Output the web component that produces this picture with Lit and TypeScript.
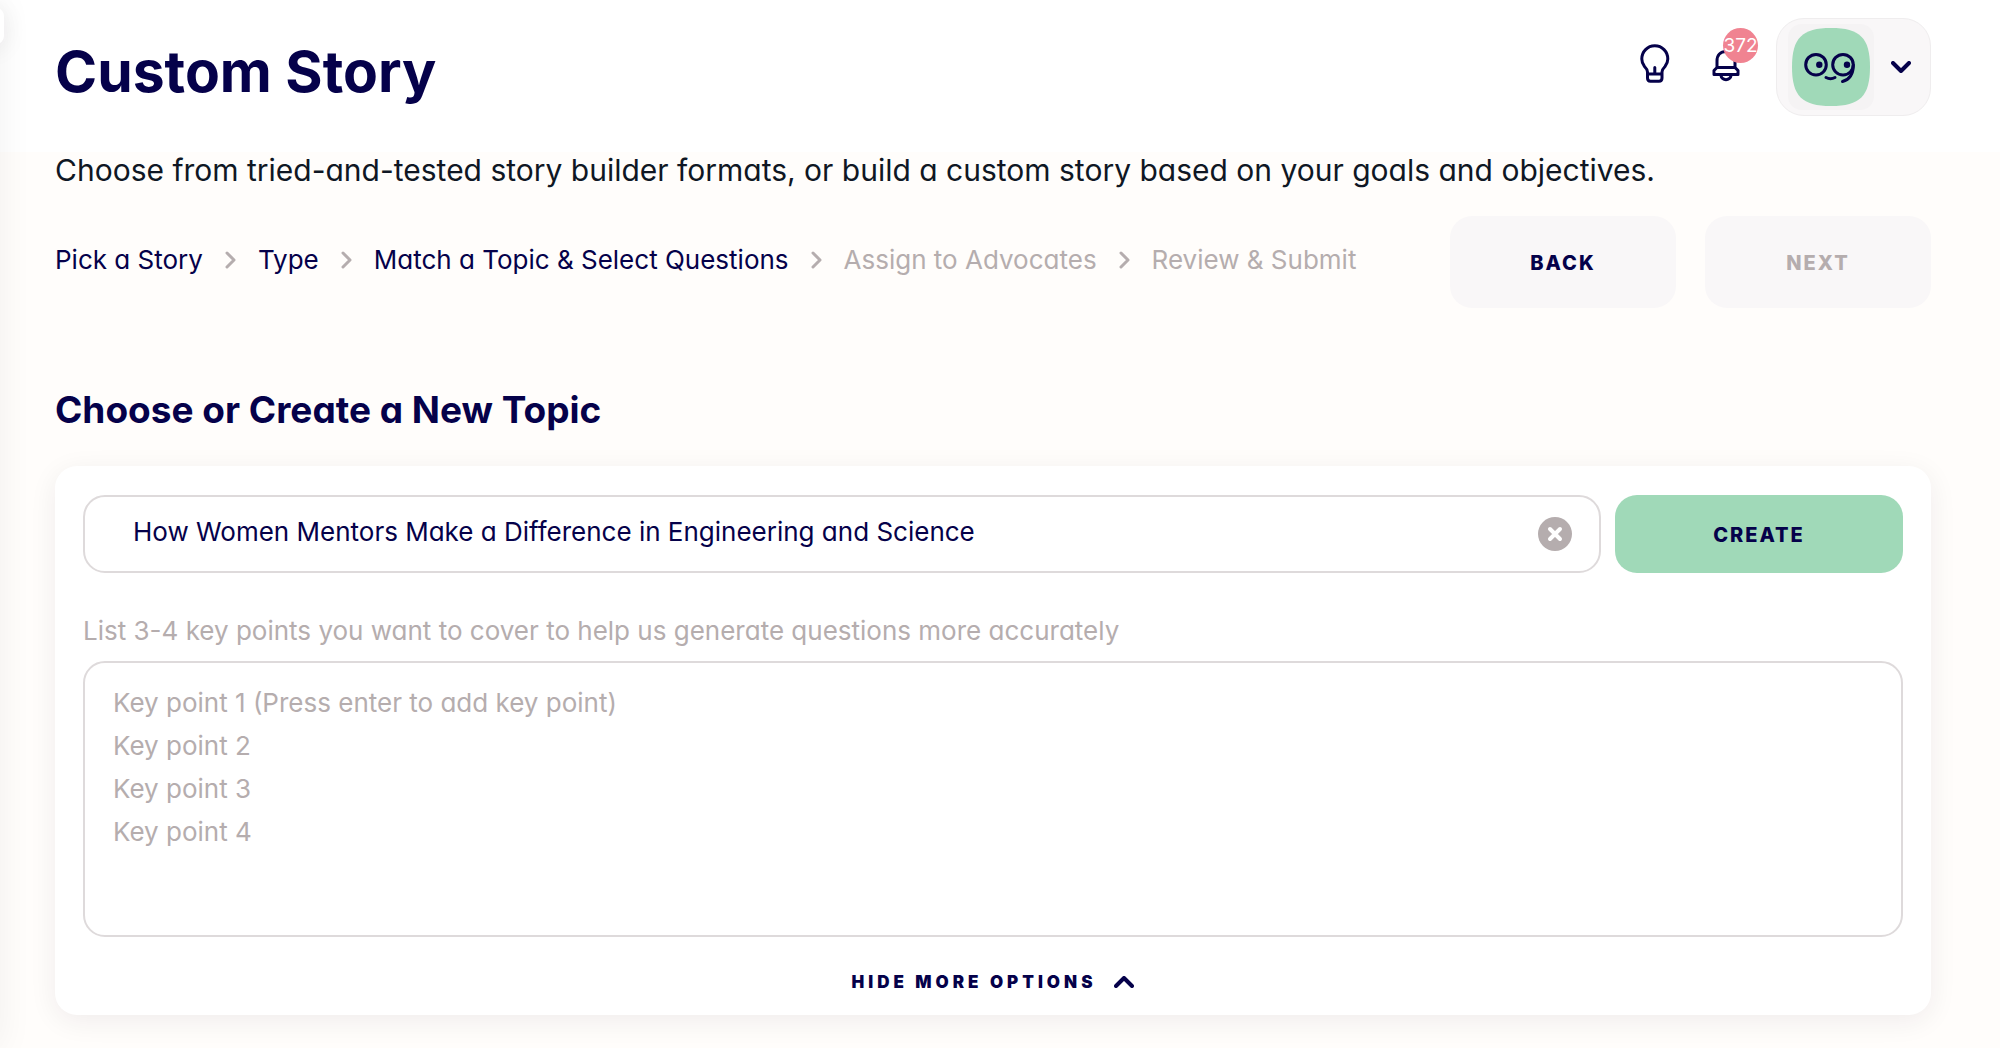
import { LitElement, html, css, svg } from "lit";
import { customElement, state } from "lit/decorators.js";

interface Step {
  label: string;
  reached: boolean;
}

const STEPS: Step[] = [
  { label: "Pick a Story", reached: true },
  { label: "Type", reached: true },
  { label: "Match a Topic & Select Questions", reached: true },
  { label: "Assign to Advocates", reached: false },
  { label: "Review & Submit", reached: false },
];

const KEY_POINTS = [
  "Key point 1 (Press enter to add key point)",
  "Key point 2",
  "Key point 3",
  "Key point 4",
].join("\n");

const bulbIcon = html`<svg class="icon" width="30" height="40" viewBox="0 0 30 40" aria-hidden="true">
  ${svg`<path d="M7.5 30V28C7.5 25.5 6.5 24.5 4.5 22.5C2.5 20 1.8 18 1.8 15C1.8 7.5 7.5 1.8 14.8 1.8S27.800 7.5 27.8 15C27.8 18 27 20 25 22.5C23 24.5 22 25.5 22 28V30M14.8 23.5V30M7.5 30H22M7.5 30V34Q7.5 37.2 10.5 37.2H19Q22 37.2 22 34V30" />`}
</svg>`;

const bellIcon = html`<svg class="icon" width="30" height="40" viewBox="0 0 30 40" aria-hidden="true">
  ${svg`<path d="M6 23V17C6 11 9.5 7.5 15 7.5S24 11 24 17V23M6 23.5H24L27 26.5V30.5H3V26.5ZM10 31.5C10.5 37 19.5 37 20 31.5" />`}
</svg>`;

const chevron = (cls: string, d: string, w: number, h: number) =>
  html`<svg class=${cls} width=${w} height=${h} viewBox="0 0 ${w} ${h}" aria-hidden="true"><path d=${d} /></svg>`;

@customElement("app-root")
export class AppRoot extends LitElement {
  @state() private topic = "How Women Mentors Make a Difference in Engineering and Science";
  @state() private expanded = true;

  static styles = css`
    :host {
      --navy: #05014a;
      --grey: #b5adae;
      --line: #dedadb;
      --soft: #f9f7f8;
      --green: #a0d9b8;
      display: block;
      position: relative;
      min-height: 100vh;
      overflow: hidden;
      background: #fffdfb;
      color: var(--navy);
      font-family: Inter, "Liberation Sans", sans-serif;
      font-feature-settings: "cv11";
      font-size: 26px;
      line-height: 32px;
    }
    * {
      box-sizing: border-box;
    }
    button,
    input,
    textarea {
      font: inherit;
      font-feature-settings: inherit;
      color: inherit;
      margin: 0;
    }
    button {
      border: 0;
      padding: 0;
      background: none;
      cursor: pointer;
    }
    h1,
    h2,
    p,
    ol {
      margin: 0;
      padding: 0;
    }
    svg {
      display: block;
      flex: none;
      fill: none;
      stroke: currentColor;
      stroke-width: 3px;
      stroke-linecap: round;
      stroke-linejoin: round;
    }
    .edge {
      position: absolute;
      top: 0;
      bottom: 0;
      left: -40px;
      width: 40px;
      box-shadow: 0 0 36px rgba(40, 20, 40, 0.06);
    }
    .tab {
      position: absolute;
      top: 8px;
      left: -32px;
      width: 36px;
      height: 36px;
      border-radius: 8px;
      background: #fff;
      box-shadow: 0 4px 24px rgba(40, 20, 40, 0.08);
    }
    .header {
      display: flex;
      align-items: flex-start;
      justify-content: space-between;
      height: 152px;
      padding: 18px 69px 0 55px;
      background: #fff;
    }
    h1 {
      padding-top: 22px;
      font-size: 57px;
      line-height: 64px;
      font-weight: 700;
    }
    .tools {
      display: flex;
      align-items: flex-start;
    }
    .tool {
      position: relative;
      margin: 26px 41px 0 0;
    }
    .tool.bell {
      margin-right: 35px;
    }
    .badge {
      position: absolute;
      top: -16px;
      left: 12px;
      width: 35px;
      height: 35px;
      border-radius: 50%;
      background: #f08391;
      color: #fff;
      font-size: 19px;
      line-height: 35px;
      text-align: center;
    }
    .icon,
    .down,
    .up {
      stroke-width: 4px;
    }
    .icon {
      stroke-width: 3px;
    }
    .account {
      display: flex;
      align-items: center;
      gap: 17px;
      height: 98px;
      padding: 0 19px 0 11px;
      border: 1px solid #efedee;
      border-radius: 28px;
      background: var(--soft);
    }
    .avatar {
      padding: 4px;
      border-radius: 14px;
      background: #f5f3f4;
    }
    .main {
      padding: 0 69px 34px 55px;
    }
    .intro {
      color: #0f1724;
      font-size: 30px;
      line-height: 36px;
    }
    .progress {
      display: flex;
      align-items: flex-start;
      justify-content: space-between;
      padding-top: 28px;
    }
    .steps {
      display: flex;
      align-items: center;
      gap: 22px;
      padding-top: 28px;
      list-style: none;
      white-space: nowrap;
    }
    .step {
      display: flex;
      align-items: center;
      gap: 22px;
    }
    .step.later {
      color: var(--grey);
    }
    .next-mark {
      color: var(--grey);
    }
    .actions {
      display: flex;
      gap: 29px;
    }
    .action {
      width: 226px;
      height: 92px;
      padding-top: 2px;
      border-radius: 22px;
      background: var(--soft);
      font-size: 20px;
      font-weight: 800;
      letter-spacing: 2px;
    }
    .action:disabled {
      color: var(--grey);
    }
    h2 {
      padding-top: 80px;
      font-size: 37px;
      line-height: 44px;
      font-weight: 700;
    }
    .card {
      margin-top: 34px;
      padding: 29px 28px 17px;
      border-radius: 22px;
      background: #fff;
      box-shadow: 0 6px 28px rgba(40, 20, 40, 0.07);
    }
    .row {
      display: flex;
      gap: 14px;
    }
    .field {
      display: flex;
      flex: 1;
      align-items: center;
      height: 78px;
      padding: 0 27px 0 48px;
      border: 2px solid var(--line);
      border-radius: 22px;
    }
    .field input {
      flex: 1;
      min-width: 0;
      padding: 0 0 4px;
      border: 0;
      outline: 0;
      background: none;
    }
    .clear {
      stroke-width: 4px;
    }
    .create {
      width: 288px;
      background: var(--green);
      height: 78px;
    }
    .hint {
      display: block;
      padding: 42px 0 14px;
      color: var(--grey);
    }
    textarea {
      display: block;
      width: 100%;
      height: 276px;
      padding: 18px 28px;
      border: 2px solid var(--line);
      border-radius: 22px;
      outline: 0;
      resize: none;
      background: none;
      line-height: 43px;
    }
    textarea::placeholder {
      color: var(--grey);
      opacity: 1;
    }
    .toggle {
      display: flex;
      align-items: center;
      gap: 18px;
      margin: 29px auto 0;
      font-size: 17px;
      font-weight: 900;
      letter-spacing: 4px;
    }
  `;

  private renderHeader() {
    return html`<header class="header">
      <h1>Custom Story</h1>
      <div class="tools">
        <button class="tool" aria-label="Tips">${bulbIcon}</button>
        <button class="tool bell" aria-label="Notifications">
          ${bellIcon}<span class="badge">372</span>
        </button>
        <button class="account" aria-label="Account">
          <span class="avatar">
            <svg width="78" height="78" viewBox="0 0 78 78" aria-hidden="true">
              <path fill="#a0d9b8" stroke="none" d="M39 0C68 0 78 10 78 39S68 78 39 78S0 68 0 39S10 0 39 0Z" />
              <circle cx="24" cy="36.7" r="10.3" />
              <circle cx="51" cy="36.7" r="10.3" />
              <path d="M61.3 37C61.3 46 58 51.5 50.5 53.5M34 49.5Q38.5 52 43 49.5" />
              <circle cx="27.3" cy="36.7" r="3.2" fill="currentColor" stroke="none" />
              <circle cx="55" cy="36.7" r="3.2" fill="currentColor" stroke="none" />
            </svg>
          </span>
          ${chevron("down", "M2 2L10 10L18 2", 20, 12)}
        </button>
      </div>
    </header>`;
  }

  private renderSteps() {
    return html`<ol class="steps">
      ${STEPS.map(
        (s, i) => html`<li class="step ${s.reached ? "" : "later"}">
          ${i ? chevron("next-mark", "M2 2L9 9L2 16", 11, 18) : ""}<span>${s.label}</span>
        </li>`
      )}
    </ol>`;
  }

  render() {
    return html`
      ${this.renderHeader()}
      <main class="main">
        <p class="intro">
          Choose from tried-and-tested story builder formats, or build a custom story based on your goals and
          objectives.
        </p>
        <div class="progress">
          ${this.renderSteps()}
          <div class="actions">
            <button class="action">BACK</button>
            <button class="action" disabled>NEXT</button>
          </div>
        </div>
        <h2>Choose or Create a New Topic</h2>
        <section class="card">
          <div class="row">
            <div class="field">
              <input
                type="text"
                aria-label="Topic"
                .value=${this.topic}
                @input=${(e: Event) => (this.topic = (e.target as HTMLInputElement).value)}
              />
              <button aria-label="Clear topic" @click=${() => (this.topic = "")}>
                <svg class="clear" width="34" height="34" viewBox="0 0 34 34" aria-hidden="true">
                  <circle cx="17" cy="17" r="17" fill="#b5adae" stroke="none" />
                  <path stroke="#fff" d="M12 12L22 22M22 12L12 22" />
                </svg>
              </button>
            </div>
            <button class="action create">CREATE</button>
          </div>
          ${this.expanded
            ? html`<label class="hint" for="points"
                  >List 3-4 key points you want to cover to help us generate questions more accurately</label
                >
                <textarea id="points" placeholder=${KEY_POINTS}></textarea>`
            : ""}
          <button class="toggle" @click=${() => (this.expanded = !this.expanded)}>
            ${this.expanded ? "HIDE" : "SHOW"} MORE OPTIONS ${chevron("up", "M2 10L10 2L18 10", 20, 12)}
          </button>
        </section>
      </main>
      <div class="edge"></div>
      <div class="tab"></div>
    `;
  }
}
